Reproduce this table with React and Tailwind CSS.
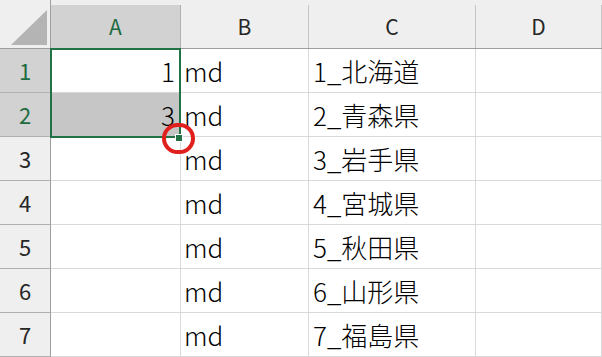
import React from "react";

const rows = [
  { n: 1, a: "1", b: "md", c: "1_北海道" },
  { n: 2, a: "3", b: "md", c: "2_青森県" },
  { n: 3, a: "", b: "md", c: "3_岩手県" },
  { n: 4, a: "", b: "md", c: "4_宮城県" },
  { n: 5, a: "", b: "md", c: "5_秋田県" },
  { n: 6, a: "", b: "md", c: "6_山形県" },
  { n: 7, a: "", b: "md", c: "7_福島県" },
];

const font = { fontFamily: '"Noto Sans CJK JP", "Noto Sans", sans-serif' };

export default function App() {
  return (
    <div className="relative w-[602px] h-[357px] overflow-hidden bg-white text-black" style={font}>
      {/* header */}
      <div className="flex h-[49px] bg-[#efefef] border-b border-[#9e9e9e]">
        <div className="w-[51px] shrink-0 flex items-start justify-end pt-[10px] pr-[3px] border-r border-[#9e9e9e]">
          <svg width="36" height="35" viewBox="0 0 36 35">
            <polygon points="0,35 36,35 36,0" fill="#b4b4b4" />
          </svg>
        </div>
        <div className="w-[130px] shrink-0 pt-[5px] flex">
          <div className="flex-1 flex items-center justify-center bg-[#d2d2d2] border-r border-[#b0b0b0] text-[21px] text-[#1e6b41]">A</div>
        </div>
        <div className="w-[128px] shrink-0 pt-[6px] flex">
          <div className="flex-1 flex items-center justify-center border-r border-[#c6c6c6] text-[21px] text-[#262626] -mt-[1px]">B</div>
        </div>
        <div className="w-[167px] shrink-0 pt-[6px] flex">
          <div className="flex-1 flex items-center justify-center border-r border-[#c6c6c6] text-[21px] text-[#262626] -mt-[1px]">C</div>
        </div>
        <div className="flex-1 pt-[6px] flex">
          <div className="w-[126px] flex items-center justify-center border-r border-[#c6c6c6] text-[21px] text-[#262626] -mt-[1px]">D</div>
        </div>
      </div>
      {/* rows */}
      {rows.map((r) => {
        const sel = r.n <= 2;
        return (
          <div key={r.n} className="flex h-[44px] border-b border-[#d9d9d9]">
            <div
              className={
                "w-[51px] shrink-0 flex items-center justify-center border-r border-[#9e9e9e] text-[22px] -mb-[1px] border-b " +
                (sel ? "bg-[#d2d2d2] text-[#1e6b41] border-b-[#b0b0b0]" : "bg-[#efefef] text-[#262626] border-b-[#b0b0b0]")
              }
            >
              {r.n}
            </div>
            <div
              className={
                "w-[130px] shrink-0 flex items-center justify-end pr-[5px] border-r border-[#d9d9d9] text-[26px] font-light " +
                (r.n === 2 ? "bg-[#c6c6c6]" : "bg-white")
              }
            >
              {r.a}
            </div>
            <div className="w-[128px] shrink-0 flex items-center pl-[3px] border-r border-[#d9d9d9] text-[26px] font-light">{r.b}</div>
            <div className="w-[167px] shrink-0 flex items-center pl-[4px] border-r border-[#d9d9d9] text-[26px] font-light">{r.c}</div>
            <div className="flex-1 flex">
              <div className="w-[126px] border-r border-[#d9d9d9]" />
            </div>
          </div>
        );
      })}
      {/* selection border */}
      <div className="absolute left-[50px] top-[48px] w-[131px] h-[90px] border-2 border-[#217346] pointer-events-none" />
      {/* fill handle */}
      <div className="absolute left-[175px] top-[134px] w-[8px] h-[8px] bg-[#217346] border border-white" />
      {/* red circle */}
      <div className="absolute left-[162px] top-[123px] w-[33px] h-[31px] rounded-full border-[4px] border-[#e0201c]" />
    </div>
  );
}
